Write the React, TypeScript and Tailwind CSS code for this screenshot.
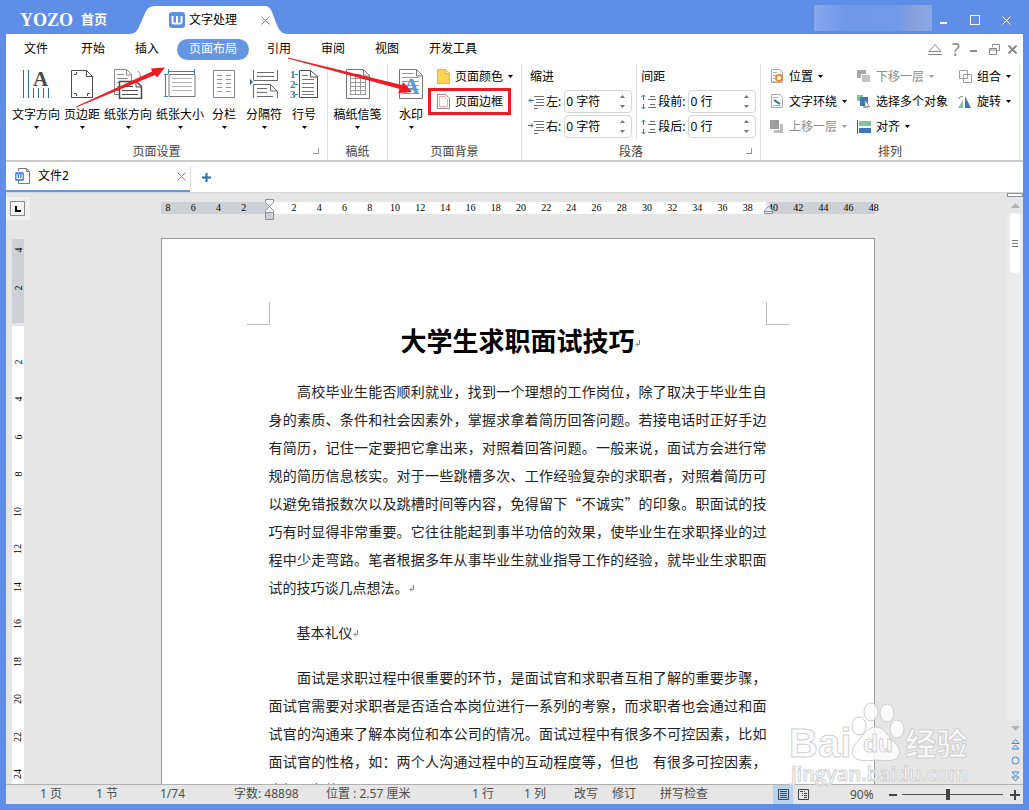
import React, { ReactNode } from "react";
import clsx from "clsx";

const Caret = ({ muted }: { muted?: boolean }) => (
  <svg width="5" height="3" viewBox="0 0 5 3" className={muted ? "text-[#9a9a9a]" : "text-black"}>
    <path d="M0 0h5L2.5 3z" fill="currentColor" />
  </svg>
);

const Svg = ({ w, h, children }: { w: number; h: number; children: ReactNode }) => (
  <svg width={w} height={h} viewBox={`0 0 ${w} ${h}`} fill="none" className="shrink-0">
    {children}
  </svg>
);

/* ---------- large ribbon icons ---------- */

const TextDirectionIcon = () => (
  <Svg w={28} h={30}>
    <path d="M1.5 1v28M6.500 1v28M11.500 19v10M16.500 19v10M21.500 19v10M26.500 19v10" stroke="#2f6da3" />
    <text x="11" y="17" fontSize="21" fontWeight="700" fill="#4a4a4a" fontFamily="Liberation Serif">
      A
    </text>
  </Svg>
);

const MarginsIcon = () => (
  <Svg w={24} h={30}>
    <path d="M1.500 1.500h15l6 6v21h-21zM16.500 1.500v6h6" stroke="#4a4a4a" />
    <path d="M4 5.500h2.500V3M4 24.500h2.500V27M20 24.500h-2.500V27" stroke="#4a4a4a" />
  </Svg>
);

const OrientationIcon = () => (
  <Svg w={30} h={30}>
    <path d="M9 25.500H1.500v-25h12l5 5V13M13.500 1v5h5" stroke="#8a8a8a" />
    <path d="M4 5.500h7M4 9.500h11M4 13.500h4M4 17.500h2M4 21.500h2" stroke="#8a8a8a" />
    <path d="M25 2c3 3 3 7 1 10" stroke="#8a8a8a" />
    <path d="M6.500 12.500h17l5 5v12h-22z" fill="#fff" stroke="#4a4a4a" strokeWidth="1.500" />
    <path d="M23 13v5h5M9 17.500h11M9 21.500h16M9 25.500h16" stroke="#4a4a4a" />
  </Svg>
);

const PaperSizeIcon = () => (
  <Svg w={32} h={30}>
    <path d="M4 2.500h27M4.500 0v5M30.500 0v5M1.500 5v23M0 5.500h4M0 27.500h4" stroke="#3f7fb8" />
    <path d="M5 5.500h26v22H5z" fill="#fff" stroke="#777" />
    <path d="M8 9.500h20M8 13.500h20M8 17.500h20M8 21.500h20" stroke="#b0b0b0" />
  </Svg>
);

const ColumnsIcon = () => (
  <Svg w={24} h={30}>
    <path d="M1.500 1.500h21v27h-21z" stroke="#888" />
    <path
      d="M5 6.500h5M14 6.500h5M5 10.500h5M14 10.500h5M5 14.500h5M14 14.500h5M5 18.500h5M14 18.500h5M5 22.500h5M14 22.500h5"
      stroke="#999"
    />
  </Svg>
);

const BreaksIcon = () => (
  <Svg w={28} h={30}>
    <path d="M3.500 1v10.500h24V1M7 3.500h17M7 7.500h17" stroke="#6a6a6a" />
    <path d="M0 10v6l3-3z" fill="#2f6da3" />
    <path d="M3.500 29V15.500h17l7 7V29M20.500 16v6h7M7 19.500h10M7 23.500h10M7 27.500h16" stroke="#6a6a6a" />
  </Svg>
);

const LineNumberIcon = () => (
  <Svg w={30} h={30}>
    <g fontSize="11" fontWeight="700" fill="#2f7db3" fontFamily="Liberation Serif">
      <text x="1" y="9">1</text>
      <text x="1" y="19">2</text>
      <text x="1" y="29">3</text>
    </g>
    <path d="M6 5.500h3M6 15.500h3M6 25.500h3" stroke="#2f7db3" />
    <path d="M10.500 1.500h11l7 6v21h-18zM21.500 2v6h7" stroke="#4a4a4a" />
    <path d="M13 6.500h6M13 10.500h12M13 14.500h12M13 18.500h12M13 22.500h12M13 25.500h12" stroke="#777" />
  </Svg>
);

const GridPaperIcon = () => (
  <Svg w={24} h={30}>
    <path d="M.5.500h17l6 6v23H.5zM17.500 1v6h6" stroke="#777" />
    <path
      d="M4.500 5.500h10M4.500 9.500h15M4.500 13.500h15M4.500 17.500h15M4.500 21.500h15M4.500 25.500h15M4.500 5v21M9.500 5v21M14.500 5v21M19.500 9v17"
      stroke="#999"
    />
  </Svg>
);

const WatermarkIcon = () => (
  <Svg w={24} h={30}>
    <path d="M.5.500h17l6 6v23H.5zM17.500 1v6h6" stroke="#777" />
    <path d="M3 4.500h12M3 8.500h17M3 12.500h17M3 16.500h17M3 20.500h17M3 24.500h17" stroke="#999" />
    <text x="4" y="25" fontSize="23" fontWeight="700" fill="#5b9bd5" fontFamily="Liberation Serif">
      A
    </text>
  </Svg>
);

/* ---------- small ribbon icons ---------- */

const PageColorIcon = () => (
  <Svg w={13} h={15}>
    <path d="M.5.500h8l4 4v10H.5z" fill="#ffd24f" stroke="#e3b53c" />
    <path d="M8.500.500v4h4z" fill="#fff3c8" stroke="#e3b53c" />
  </Svg>
);

const PageBorderIcon = () => (
  <Svg w={13} h={15}>
    <path d="M.5.500h8l4 4v10H.5z" fill="#fff" stroke="#8c8c8c" />
    <path d="M2.500 2.500H8l2.500 3v7h-8z" stroke="#f5a9a9" />
  </Svg>
);

const IndentIcon = ({ right }: { right?: boolean }) => (
  <Svg w={17} h={14}>
    <path d="M6 1.500h10M8 4.500h8M8 7.500h8M6 10.500h10M6 13.500h4" stroke="#6f6f6f" />
    {right ? (
      <path d="M0 5.500h5M3 3.500l2 2-2 2" stroke="#2f6da3" />
    ) : (
      <path d="M1 5.500h5M3 3.500l-2 2 2 2" stroke="#2f6da3" />
    )}
  </Svg>
);

const SpacingIcon = () => (
  <Svg w={16} h={16}>
    <path d="M2.500 1v5M.5 3l2-2 2 2M2.500 10v5M.5 13l2 2 2-2" stroke="#3a78b0" />
    <path d="M9 2.500h5M7 5.500h8M9 10.500h5M7 13.500h8" stroke="#6f6f6f" />
  </Svg>
);

const PositionIcon = () => (
  <Svg w={13} h={15}>
    <path d="M.5.500h8l3 3v10H.5zM2 3.500h4M2 6.500h3M2 9.500h2M2 12.500h2" stroke="#a8a8a8" />
    <circle cx="8" cy="9" r="3" fill="#fff" stroke="#e8892f" strokeWidth="2" />
  </Svg>
);

const WrapIcon = () => (
  <Svg w={13} h={15}>
    <path d="M.5.500h8l3 3v10H.5zM2 3.500h5M2 11.500h8" stroke="#a8a8a8" />
    <path d="M3 6l6 4" stroke="#2f6da3" strokeWidth="2" />
  </Svg>
);

const ForwardIcon = () => (
  <Svg w={14} h={13}>
    <path d="M11.500 4v7.500H4" stroke="#bdbdbd" strokeWidth="3" />
    <path d="M0 0h9v9H0z" fill="#9d9d9d" />
  </Svg>
);

const BackwardIcon = () => (
  <Svg w={14} h={13}>
    <path d="M0 0h9v8H0z" fill="#a8a8a8" />
    <path d="M4.500 4.500h9v8h-9z" fill="#c4c4c4" stroke="#fff" />
  </Svg>
);

const SelectIcon = () => (
  <Svg w={14} h={14}>
    <path d="M0 0h6v6H0zM6 8h5v5H6z" fill="#82c598" />
    <path d="M3 2h8v9H3z" fill="#3f77b4" />
    <path d="M8 5v8l2-2 3 1z" fill="#fff" stroke="#777" strokeWidth=".7" />
  </Svg>
);

const AlignIcon = () => (
  <Svg w={14} h={14}>
    <path d="M.5 0v14" stroke="#555" />
    <path d="M2 1h12v5H2z" fill="#82c598" />
    <path d="M2 8h12v5H2z" fill="#3f77b4" />
  </Svg>
);

const GroupIcon = () => (
  <Svg w={13} h={13}>
    <path d="M.5.500h8v8h-8zM4.500 4.500h8v8h-8z" stroke="#a0a0a0" />
  </Svg>
);

const RotateIcon = () => (
  <Svg w={14} h={14}>
    <path d="M5 5v8H0z" fill="#82c598" />
    <path d="M7 1l6 12H7z" fill="#3f77b4" />
    <path d="M1 4c0-2 2-3 4-2" stroke="#777" />
  </Svg>
);

/* ---------- ribbon parts ---------- */

interface GroupProps {
  title: string;
  className?: string;
  launcher?: boolean;
  children: ReactNode;
}

const Group = ({ title, className, launcher, children }: GroupProps) => (
  <section
    className={clsx("relative flex h-full shrink-0 flex-col justify-between border-r border-[#e2e2e2]", className)}
  >
    <div className="flex">{children}</div>
    <h2 className={clsx("h-4 text-center leading-4 text-[#444]", launcher && "pr-5")}>{title}</h2>
    {launcher && (
      <button aria-label={title} className="absolute right-2 bottom-1.5 size-[6px] border-r border-b border-[#999]" />
    )}
  </section>
);

const BigButton = ({ icon, label, className }: { icon: ReactNode; label: string; className: string }) => (
  <button className={clsx("flex flex-col items-center pt-[5px] whitespace-nowrap", className)}>
    {icon}
    <span className="mt-2 mb-[3px] leading-4">{label}</span>
    <Caret />
  </button>
);

interface SmallProps {
  icon: ReactNode;
  label: string;
  caret?: boolean;
  muted?: boolean;
}

const SmallButton = ({ icon, label, caret, muted }: SmallProps) => (
  <button
    disabled={muted}
    className={clsx("flex h-[25px] items-center gap-[5px] whitespace-nowrap", muted && "text-[#8c8c8c]")}
  >
    <span className="flex w-[14px] justify-center">{icon}</span>
    <span>{label}</span>
    {caret && <Caret muted={muted} />}
  </button>
);

const NumberField = ({ icon, label, value }: { icon: ReactNode; label: string; value: string }) => (
  <div className="flex h-[25px] items-center">
    <label className="flex items-center gap-px whitespace-nowrap">
      {icon}
      <span>{label}</span>
      <span className="ml-0.5 flex h-[23px] w-[68px] items-center rounded-[4px] border border-[#d4d4d4] bg-white">
        <input defaultValue={value} className="w-[52px] bg-transparent pl-px outline-none" />
        <svg width="7" height="15" viewBox="0 0 7 15" className="ml-0.5">
          <path d="M1 4l2.500-3L6 4zM1 11l2.500 3L6 11z" fill="#777" />
        </svg>
      </span>
    </label>
  </div>
);

const menus = ["开始", "插入", "页面布局", "引用", "审阅", "视图", "开发工具"];

const pageSetup = [
  { label: "文字方向", icon: <TextDirectionIcon />, className: "w-[52px]" },
  { label: "页边距", icon: <MarginsIcon />, className: "w-10" },
  { label: "纸张方向", icon: <OrientationIcon />, className: "w-[52px]" },
  { label: "纸张大小", icon: <PaperSizeIcon />, className: "w-[52px]" },
  { label: "分栏", icon: <ColumnsIcon />, className: "w-9" },
  { label: "分隔符", icon: <BreaksIcon />, className: "w-11" },
  { label: "行号", icon: <LineNumberIcon />, className: "w-9" }
];

const TitleBar = () => (
  <header className="flex h-[34px] shrink-0 text-white">
    <a href="#" className="flex w-[122px] items-center gap-2 pt-1.5 pl-3.5">
      <span className="font-['Liberation_Serif',serif] text-lg leading-none font-bold">YOZO</span>
      <span className="text-[13px] font-bold">首页</span>
    </a>
    <div className="flex h-7 shrink-0 self-end text-black">
      <svg width="28" height="28" viewBox="0 0 28 28">
        <path d="M0 28C10 28 10 22 14 14S18 0 28 0v28z" fill="#fff" />
      </svg>
      <div className="flex w-[110px] items-center bg-white pl-[13px] whitespace-nowrap">
        <svg width="16" height="16" viewBox="0 0 16 16" className="shrink-0">
          <rect width="16" height="16" rx="3" fill="#5e8ee6" />
          <path
            d="M3.500 4v6q0 1.500 1.500 1.500h6q1.500 0 1.500-1.500V4M8 4v7"
            stroke="#fff"
            strokeWidth="2"
            fill="none"
          />
        </svg>
        <span className="ml-1">文字处理</span>
        <button aria-label="关闭" className="z-10 -mr-1 ml-auto">
          <svg width="9" height="9" viewBox="0 0 9 9" stroke="#888">
            <path d="M.5.500l8 8M8.500.500l-8 8" />
          </svg>
        </button>
      </div>
      <svg width="22" height="28" viewBox="0 0 22 28">
        <path d="M0 0c5 1 6 6 9 14s5 14 13 14H0z" fill="#fff" />
      </svg>
    </div>
    <div className="mt-[5px] mr-2 ml-auto h-[26px] w-[118px] bg-[linear-gradient(to_right,#86a8eb,#6f99e8_25%,#709ae6_70%,#8a9fdb_85%,#86a9ea)]" />
    <div className="flex items-center gap-[22px] pt-1.5 pr-3">
      <button aria-label="最小化">
        <svg width="8" height="10" viewBox="0 0 8 10">
          <path d="M0 8h7" stroke="#fff" strokeWidth="2" />
        </svg>
      </button>
      <button aria-label="最大化" className="h-[10px] w-[10px] border border-white" />
      <button aria-label="关闭窗口">
        <svg width="9" height="9" viewBox="0 0 9 9" stroke="#fff">
          <path d="M.5.500l8 8M8.500.500l-8 8" />
        </svg>
      </button>
    </div>
  </header>
);

const MenuBar = () => (
  <nav className="flex h-[30px] shrink-0 items-center bg-white">
    <button className="h-[21px] pr-[21px] pl-[18px]">文件</button>
    <div className="flex gap-1.5">
      {menus.map((menu) => (
        <button
          key={menu}
          className={clsx("h-[21px] rounded-full px-3", menu === "页面布局" && "bg-[#6596e4] text-white")}
        >
          {menu}
        </button>
      ))}
    </div>
    <div className="ml-auto flex items-center gap-2 pr-1.5 text-[#8a8a8a]">
      <button aria-label="收起功能区">
        <svg width="14" height="12" viewBox="0 0 14 12" fill="none" stroke="currentColor">
          <path d="M1 8.500L7 1.500l6 7zM0 11.500h14" />
        </svg>
      </button>
      <button className="w-3 font-['Noto_Sans',sans-serif] text-lg leading-none">?</button>
      <button aria-label="最小化文档" className="mt-1 h-0.5 w-[7px] bg-[#8a8a8a]" />
      <button aria-label="还原文档" className="ml-1">
        <svg width="11" height="11" viewBox="0 0 11 11" fill="none" stroke="currentColor">
          <path d="M3.500 3V.5h7v6H8M.5 4.500h7v6h-7zM.5 6h7" />
        </svg>
      </button>
      <button aria-label="关闭文档">
        <svg width="9" height="9" viewBox="0 0 9 9" stroke="currentColor" strokeWidth="2">
          <path d="M.5.500l8 8M8.500.500l-8 8" />
        </svg>
      </button>
    </div>
  </nav>
);

const Ribbon = () => (
  <div className="flex h-[98px] shrink-0 border-b-2 border-[#cbcbcb] bg-white">
    <Group title="页面设置" launcher className="w-[322px]">
      <div className="flex pl-1">
        {pageSetup.map((item) => (
          <BigButton key={item.label} {...item} />
        ))}
      </div>
    </Group>
    <Group title="稿纸" className="w-[60px]">
      <BigButton icon={<GridPaperIcon />} label="稿纸信笺" className="w-full" />
    </Group>
    <Group title="页面背景" className="w-[134px]">
      <BigButton icon={<WatermarkIcon />} label="水印" className="ml-[5px] w-9" />
      <div className="ml-[7px]">
        <SmallButton icon={<PageColorIcon />} label="页面颜色" caret />
        <div className="relative w-fit">
          <SmallButton icon={<PageBorderIcon />} label="页面边框" />
          <div className="pointer-events-none absolute -inset-x-2 -inset-y-px border-3 border-[#ed1c24]" />
        </div>
      </div>
    </Group>
    <Group title="段落" launcher className="w-[239px]">
      <div className="pl-1.5">
        <div className="h-[25px] pl-0.5 leading-[25px]">缩进</div>
        <NumberField icon={<IndentIcon />} label="左:" value="0 字符" />
        <NumberField icon={<IndentIcon right />} label="右:" value="0 字符" />
      </div>
      <div className="ml-1 border-l border-[#e2e2e2] pl-1">
        <div className="h-[25px] leading-[25px]">间距</div>
        <NumberField icon={<SpacingIcon />} label="段前:" value="0 行" />
        <NumberField icon={<SpacingIcon />} label="段后:" value="0 行" />
      </div>
    </Group>
    <Group title="排列" className="w-[259px]">
      <div className="flex w-full pl-[9px]">
        <div className="w-[87px]">
          <SmallButton icon={<PositionIcon />} label="位置" caret />
          <SmallButton icon={<WrapIcon />} label="文字环绕" caret />
          <SmallButton icon={<ForwardIcon />} label="上移一层" caret muted />
        </div>
        <div className="w-[101px]">
          <SmallButton icon={<BackwardIcon />} label="下移一层" caret muted />
          <SmallButton icon={<SelectIcon />} label="选择多个对象" />
          <SmallButton icon={<AlignIcon />} label="对齐" caret />
        </div>
        <div>
          <SmallButton icon={<GroupIcon />} label="组合" caret />
          <SmallButton icon={<RotateIcon />} label="旋转" caret />
        </div>
      </div>
    </Group>
  </div>
);

const DocumentTabs = () => (
  <div className="flex h-[31px] shrink-0 border-b border-[#d8d8d8] bg-white">
    <div className="flex w-[184px] items-center border-b-2 border-[#6596e4] px-2">
      <svg width="17" height="18" viewBox="0 0 17 18" fill="none">
        <path d="M4.500 4V1.500h8l3 3v12h-11V14M12.500 1.500v3h3" stroke="#777" />
        <rect x="1" y="5" width="9" height="9" rx="1.500" fill="#5e8ee6" />
        <path d="M3 7.500v4h5v-4M5.500 7.500v4" stroke="#fff" />
      </svg>
      <span className="ml-[7px]">文件2</span>
      <button aria-label="关闭标签" className="ml-auto -mr-1">
        <svg width="9" height="9" viewBox="0 0 9 9" stroke="#888">
          <path d="M.5.500l8 8M8.500.500l-8 8" />
        </svg>
      </button>
    </div>
    <button aria-label="新建标签" className="my-1 border-l border-[#ddd] px-[11px]">
      <svg width="9" height="9" viewBox="0 0 9 9" stroke="#1f6fb5" strokeWidth="2">
        <path d="M0 4.500h9M4.500 0v9" />
      </svg>
    </button>
  </div>
);

const topNumbers = Array.from({ length: 29 }, (_, i) => Math.abs(i * 2 - 8));
const sideNumbers = Array.from({ length: 12 }, (_, i) => i * 2 + 2);

const HorizontalRuler = () => (
  <div className="relative h-3 w-[714px] shrink-0 bg-[linear-gradient(to_right,#cdd0d5_108px,#fff_108px,#fff_605px,#e6e6e6_605px,#e6e6e6_608px,#cdd0d5_608px)] font-['Liberation_Serif',serif] text-[10px] leading-3">
    <div className="-mr-3 -ml-[5px] flex text-center">
      {topNumbers.map((n, i) => (
        <span key={i} className="w-0 flex-1">
          {n === 0 ? "" : n}
        </span>
      ))}
    </div>
    <svg width="9" height="21" viewBox="0 0 9 21" className="absolute -top-[3px] left-[104px]" stroke="#8d939c">
      <path d="M.5.500h8v3l-4 4-4-4zM4.500 7.500l4 4v2h-8v-2z" fill="#f0f2f5" />
      <path d="M.5 13.500h8v7h-8z" fill="#cdd0d5" />
    </svg>
    <svg width="9" height="8" viewBox="0 0 9 8" className="absolute top-1 left-[603px]" stroke="#8d939c">
      <path d="M4.500.500l4 4v3h-8v-3zM.5 5.500h8" fill="#e8ebf0" />
    </svg>
  </div>
);

const VerticalRuler = () => (
  <div className="mt-[19px] ml-1.5 flex min-h-0 w-3 flex-1 flex-col overflow-hidden font-['Liberation_Serif',serif] text-[10px] leading-none">
    <div className="mb-[3px] flex h-[84px] shrink-0 flex-col justify-end overflow-hidden bg-[#cdd0d5] pb-4">
      {[4, 2].map((n) => (
        <span key={n} className="flex h-[38px] shrink-0 items-center justify-center">
          <span className="-rotate-90">{n}</span>
        </span>
      ))}
    </div>
    <div className="min-h-0 flex-1 overflow-hidden bg-white pt-[17px]">
      <div className="flex h-[450px] flex-col">
        {sideNumbers.map((n) => (
          <span key={n} className="flex flex-1 items-center justify-center">
            <span className="-rotate-90">{n}</span>
          </span>
        ))}
      </div>
    </div>
  </div>
);

const ReturnMark = () => (
  <svg width="6" height="8" viewBox="0 0 6 8" fill="none" stroke="#888" className="-mr-[6px] inline-block">
    <path d="M4.500 0v4.500H1M3 2.500l-2 2 2 2" />
  </svg>
);

const intro = [
  "　　高校毕业生能否顺利就业，找到一个理想的工作岗位，除了取决于毕业生自",
  "身的素质、条件和社会因素外，掌握求拿着简历回答问题。若接电话时正好手边",
  "有简历，记住一定要把它拿出来，对照着回答问题。一般来说，面试方会进行常",
  "规的简历信息核实。对于一些跳槽多次、工作经验复杂的求职者，对照着简历可",
  "以避免错报数次以及跳槽时间等内容，免得留下“不诚实”的印象。职面试的技",
  "巧有时显得非常重要。它往往能起到事半功倍的效果，使毕业生在求职择业的过",
  "程中少走弯路。笔者根据多年从事毕业生就业指导工作的经验，就毕业生求职面"
];

const manners = [
  "　　面试是求职过程中很重要的环节，是面试官和求职者互相了解的重要步骤，",
  "面试官需要对求职者是否适合本岗位进行一系列的考察，而求职者也会通过和面",
  "试官的沟通来了解本岗位和本公司的情况。面试过程中有很多不可控因素，比如",
  "面试官的性格，如：两个人沟通过程中的互动程度等，但也　有很多可控因素，"
];

const Lines = ({ lines }: { lines: string[] }) => (
  <>
    {lines.map((line) => (
      <span key={line} className="block text-justify whitespace-nowrap [text-align-last:justify]">
        {line}
      </span>
    ))}
  </>
);

const Page = () => (
  <article
    lang="zh-CN"
    className="relative mt-6 w-[714px] shrink-0 border border-b-0 border-[#999] bg-white px-[107px] pt-[84px] font-['Noto_Sans_CJK_SC',sans-serif] text-sm leading-7 text-[#222]"
  >
    <div className="absolute top-[63px] left-[85px] size-[23px] border-r border-b border-[#bbb]" />
    <div className="absolute top-[63px] right-[85px] size-[23px] border-b border-l border-[#bbb]" />
    <h1 className="mb-5 text-center text-[26px] leading-[34px] font-bold text-black">
      大学生求职面试技巧
      <ReturnMark />
    </h1>
    <p>
      <Lines lines={intro} />
      试的技巧谈几点想法。
      <ReturnMark />
    </p>
    <p className="my-[17px]">
      {"　　"}基本礼仪
      <ReturnMark />
    </p>
    <p>
      <Lines lines={manners} />
      也如　有他
    </p>
  </article>
);

const Scrollbar = () => (
  <div className="flex w-4 shrink-0 flex-col items-center bg-[#e6e6e6] text-[#4c86c0]">
    <div className="h-1 w-full border border-[#8d939c] bg-white" />
    <button aria-label="向上滚动" className="flex h-4 items-center">
      <svg width="9" height="5" viewBox="0 0 9 5">
        <path d="M0 5l4.500-5L9 5z" fill="#b3b3b3" />
      </svg>
    </button>
    <div className="flex w-full flex-1 justify-center bg-[#ececec]">
      <div className="flex h-[60px] w-[10px] flex-col items-center justify-center gap-0.5 rounded-sm bg-white">
        <span className="h-px w-1.5 bg-[#777]" />
        <span className="h-px w-1.5 bg-[#777]" />
        <span className="h-px w-1.5 bg-[#777]" />
      </div>
    </div>
    <button aria-label="向下滚动" className="flex h-4 items-center">
      <svg width="9" height="5" viewBox="0 0 9 5">
        <path d="M0 0h9L4.500 5z" fill="#b3b3b3" />
      </svg>
    </button>
    <button aria-label="上一页" className="flex h-4 items-center">
      <svg width="9" height="11" viewBox="0 0 9 11" fill="none" stroke="currentColor">
        <path d="M1 4.500l3.500-4 3.500 4zM1 10l3.500-4L8 10z" />
      </svg>
    </button>
    <button aria-label="选择浏览对象" className="flex h-4 items-center">
      <svg width="9" height="9" viewBox="0 0 9 9" fill="none" stroke="currentColor">
        <circle cx="4.500" cy="4.500" r="3.500" />
      </svg>
    </button>
    <button aria-label="下一页" className="flex h-4 items-center">
      <svg width="9" height="11" viewBox="0 0 9 11" fill="none" stroke="currentColor">
        <path d="M1 1h7L4.500 5zM1 6h7l-3.500 4z" />
      </svg>
    </button>
  </div>
);

const status = [
  { text: "1 页", className: "w-14" },
  { text: "1 节", className: "w-16" },
  { text: "1/74", className: "w-[74px]" },
  { text: "字数: 48898", className: "w-[92px]" },
  { text: "位置 : 2.57 厘米", className: "w-[146px]" },
  { text: "1 行", className: "w-[52px]" },
  { text: "1 列", className: "w-[50px]" },
  { text: "改写", className: "w-[38px]" },
  { text: "修订", className: "w-12" },
  { text: "拼写检查", className: "w-28" }
];

const StatusBar = () => (
  <footer className="relative flex h-5 shrink-0 items-stretch border-t border-[#b0b0b0] bg-[#e6e6e6] pl-[34px] leading-[18px] whitespace-nowrap text-[#4d4d4d]">
    {status.map((item) => (
      <span key={item.text} className={item.className}>
        {item.text}
      </span>
    ))}
    <div className="ml-auto flex items-center pr-[3px]">
      <button aria-label="页面视图" className="flex h-full w-5 items-center justify-center bg-[#b7d3ee]">
        <svg width="11" height="11" viewBox="0 0 11 11" fill="none" stroke="#444">
          <path d="M.5.500h10v10H.5zM2 2.500h7M2 4.500h7M2 6.500h7M2 8.500h7" />
        </svg>
      </button>
      <button aria-label="大纲视图" className="flex w-5 justify-center">
        <svg width="11" height="11" viewBox="0 0 11 11" fill="none" stroke="#444">
          <path d="M.5.500h10v10H.5zM2 2.500h3M6 2.500h1M4 4.500h1M6 4.500h3M4 6.500h1M6 6.500h3M6 8.500h3" />
        </svg>
      </button>
      <span className="ml-[37px] w-[39px]">90%</span>
      <button aria-label="缩小" className="h-0.5 w-2 bg-[#444]" />
      <input
        type="range"
        aria-label="缩放"
        min={0}
        max={100}
        defaultValue={45}
        className="mx-[5px] h-[11px] w-[101px] appearance-none bg-[linear-gradient(#555,#555)] bg-[length:100%_1px] bg-center bg-no-repeat [&::-webkit-slider-thumb]:h-[11px] [&::-webkit-slider-thumb]:w-1 [&::-webkit-slider-thumb]:appearance-none [&::-webkit-slider-thumb]:bg-[#444]"
      />
      <button aria-label="放大" className="ml-0.5">
        <svg width="10" height="10" viewBox="0 0 10 10" stroke="#444" strokeWidth="2">
          <path d="M0 5h10M5 0v10" />
        </svg>
      </button>
    </div>
  </footer>
);

const Watermark = () => (
  <div className="pointer-events-none absolute right-14 bottom-[26px] w-[184px] font-['Liberation_Sans','Noto_Sans_CJK_SC',sans-serif] leading-none font-bold text-white/80 [-webkit-text-stroke:1px_#d0d0d0]">
    <div className="flex items-end">
      <span className="pb-px text-[40px]">Bai</span>
      <div className="relative h-[62px] w-[54px]">
        <svg width="54" height="62" viewBox="0 0 54 62" fill="#fff" fillOpacity=".8" stroke="#cccccc">
          <ellipse cx="8" cy="24" rx="7" ry="9" />
          <ellipse cx="20" cy="10" rx="7" ry="9" />
          <ellipse cx="36" cy="11" rx="7" ry="9" />
          <ellipse cx="46" cy="27" rx="7" ry="9" />
          <path d="M25 25c8 0 11 8 16 13 6 5 9 10 7 15-3 7-12 6-23 5-10 1-20 2-23-5-2-5 1-10 6-15 5-6 9-13 17-13z" />
        </svg>
        <span className="absolute bottom-1 left-3 text-2xl">du</span>
      </div>
      <span className="pb-1 text-[31px]">经验</span>
    </div>
    <div className="pl-0.5 font-['Open_Sans',sans-serif] text-xl leading-5 font-semibold">jingyan.baidu.com</div>
  </div>
);

const Arrows = () => (
  <svg
    width="430"
    height="120"
    viewBox="0 0 430 120"
    className="pointer-events-none absolute top-0 left-0"
    fill="#ed1c24"
  >
    <path d="M76 106.500L152 71.500l-1-3 14-1-8 10-2-2.500L76 107.500z" />
    <path d="M288 57.500L402 85l1-3 9 10-14 1 2-4L288 58.500z" />
  </svg>
);

const App = () => {
  return (
    <div className="relative flex h-screen flex-col overflow-hidden bg-[#5e8ee6] px-1.5 pb-1.5 font-['Noto_Sans','Noto_Sans_CJK_SC',sans-serif] text-xs text-black">
      <TitleBar />
      <MenuBar />
      <Ribbon />
      <DocumentTabs />
      <main className="flex min-h-0 flex-1 overflow-hidden bg-[#e6e6e6]">
        <div className="flex w-6 shrink-0 flex-col pt-1">
          <div className="flex h-[23px] items-center bg-[#f0f0f0] pl-1">
            <button
              aria-label="制表符"
              className="flex size-[15px] items-center justify-center border border-[#888] bg-[#f6f6f6]"
            >
              <span className="size-1.5 border-b-2 border-l-2 border-black" />
            </button>
          </div>
          <VerticalRuler />
        </div>
        <div className="flex min-w-0 flex-1 flex-col items-center overflow-hidden pt-[9px] pr-0.5">
          <HorizontalRuler />
          <Page />
        </div>
        <Scrollbar />
      </main>
      <StatusBar />
      <Watermark />
      <Arrows />
    </div>
  );
};

export default App;
